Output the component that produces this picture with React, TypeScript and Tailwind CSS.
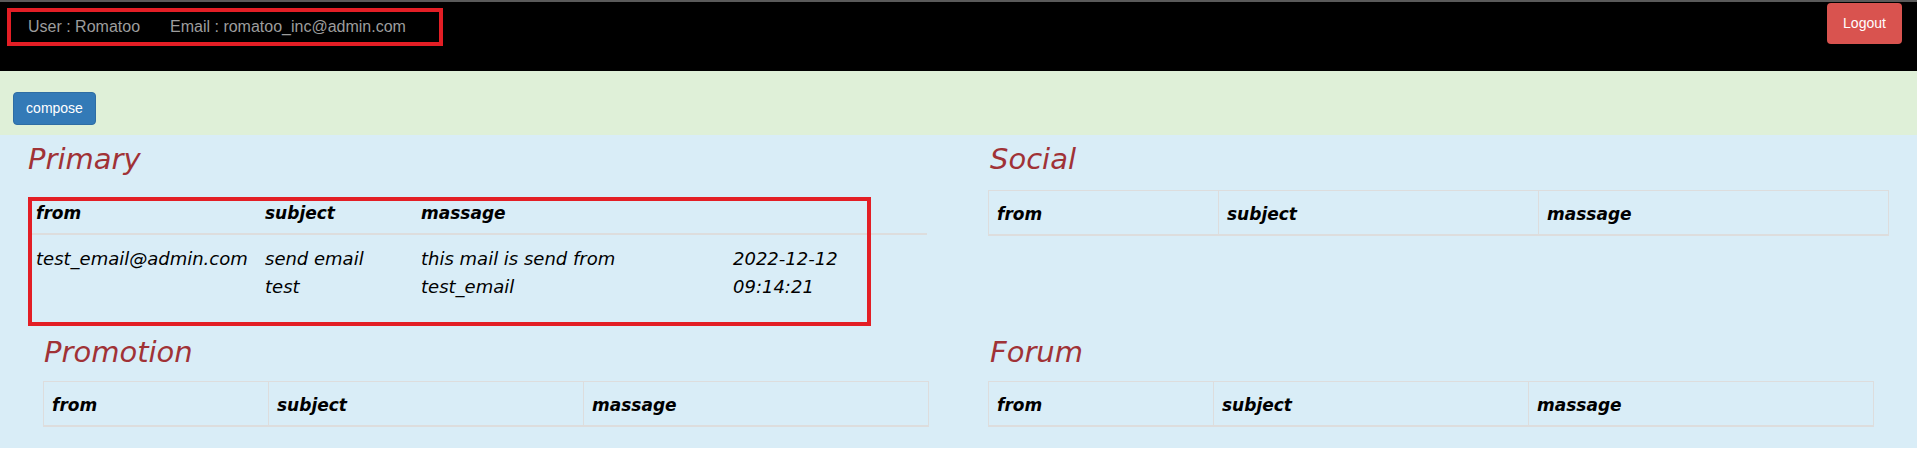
import React from "react";

const comic = "font-['DejaVu_Sans',sans-serif] italic";

function Heading({ children, className = "" }: { children: React.ReactNode; className?: string }) {
  return (
    <div className={`${comic} h-[36px] text-[29px] leading-[36px] text-[#a03236] ${className}`}>
      {children}
    </div>
  );
}

function BorderedTable({ widths, className = "" }: { widths: number[]; className?: string }) {
  const heads = ["from", "subject", "massage"];
  return (
    <table className={`${comic} table-fixed w-full border border-[#dddddd] text-black ${className}`}>
      <colgroup>
        {widths.map((w, i) => (
          <col key={i} style={{ width: w }} />
        ))}
      </colgroup>
      <thead>
        <tr>
          {heads.map((h) => (
            <th
              key={h}
              className="border border-[#dddddd] border-b-2 px-2 pt-[10px] pb-[6px] text-left text-[17px] leading-[27px] font-bold"
            >
              {h}
            </th>
          ))}
        </tr>
      </thead>
    </table>
  );
}

export default function App() {
  return (
    <div className="relative w-full bg-white">
      <div className="h-[2px] bg-[#5a5a5a]" />
      <header className="flex h-[69px] items-start justify-between bg-black">
        <div className="flex gap-[30px] pl-[28px] pt-[14px] font-['Liberation_Sans',Arial,sans-serif] text-[16px] leading-[22px] text-[#9d9d9d]">
          <span>User : Romatoo</span>
          <span>Email : romatoo_inc@admin.com</span>
        </div>
        <button className="mr-[15px] mt-[1px] h-[41px] w-[75px] rounded-[4px] bg-[#d9534f] font-['Liberation_Sans',Arial,sans-serif] text-[14px] text-white">
          Logout
        </button>
      </header>
      <div className="h-[64px] bg-[#dff0d8] pl-[13px] pt-[21px]">
        <button className="h-[33px] w-[83px] rounded-[4px] border border-[#2e6da4] bg-[#337ab7] font-['Liberation_Sans',Arial,sans-serif] text-[14px] text-white">
          compose
        </button>
      </div>
      <main className="h-[313px] bg-[#d9edf7]">
        <div className="flex items-start gap-[61px] pl-[28px] pt-[6px]">
          <div className="w-[899px]">
            <Heading>Primary</Heading>
            <table className={`${comic} mt-[13px] table-fixed w-full text-black`}>
              <colgroup>
                <col style={{ width: 229 }} />
                <col style={{ width: 156 }} />
                <col style={{ width: 312 }} />
                <col style={{ width: 202 }} />
              </colgroup>
              <thead>
                <tr>
                  <th className="border-b-2 border-[#dddddd] px-2 pt-[10px] pb-[6px] text-left text-[17px] leading-[27px] font-bold">from</th>
                  <th className="border-b-2 border-[#dddddd] px-2 pt-[10px] pb-[6px] text-left text-[17px] leading-[27px] font-bold">subject</th>
                  <th className="border-b-2 border-[#dddddd] px-2 pt-[10px] pb-[6px] text-left text-[17px] leading-[27px] font-bold">massage</th>
                  <th className="border-b-2 border-[#dddddd] px-2 pt-[10px] pb-[6px] text-left text-[17px] leading-[27px] font-bold"></th>
                </tr>
              </thead>
              <tbody>
                <tr className="align-top text-[18px] leading-[28px]">
                  <td className="px-2 py-[10px]">test_email@admin.com</td>
                  <td className="px-2 py-[10px]">
                    send email
                    <br />
                    test
                  </td>
                  <td className="px-2 py-[10px]">
                    this mail is send from
                    <br />
                    test_email
                  </td>
                  <td className="px-2 py-[10px]">
                    2022-12-12
                    <br />
                    09:14:21
                  </td>
                </tr>
              </tbody>
            </table>
          </div>
          <div className="w-[900px]">
            <Heading className="pl-[2px]">Social</Heading>
            <BorderedTable widths={[230, 320, 350]} className="mt-[13px]" />
          </div>
        </div>
        <div className="mt-[23px] flex items-start gap-[60px] pl-[43px]">
          <div className="w-[885px]">
            <Heading className="pl-[1px]">Promotion</Heading>
            <BorderedTable widths={[225, 315, 345]} className="mt-[11px]" />
          </div>
          <div className="w-[885px]">
            <Heading className="pl-[2px]">Forum</Heading>
            <BorderedTable widths={[225, 315, 345]} className="mt-[11px]" />
          </div>
        </div>
      </main>
      <div className="h-[3px] bg-white" />

      <div className="pointer-events-none absolute left-[7px] top-[8px] h-[38px] w-[436px] border-4 border-[#e31e25]" />
      <div className="pointer-events-none absolute left-[28px] top-[197px] h-[129px] w-[843px] border-4 border-[#e31e25]" />
    </div>
  );
}
